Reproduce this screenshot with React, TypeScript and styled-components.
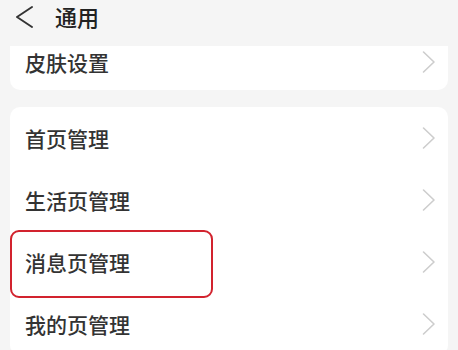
import React from "react";
import styled, { createGlobalStyle } from "styled-components";

const Global = createGlobalStyle`
  html, body { margin: 0; padding: 0; background: #f5f5f5; }
  body { font-family: "Noto Sans CJK SC", "Noto Sans", sans-serif; }
`;

const Page = styled.div`
  width: 458px;
  height: 350px;
  overflow: hidden;
  background: #f5f5f5;
  position: relative;
  display: flex;
  flex-direction: column;
`;

const Header = styled.div`
  height: 46px;
  flex: 0 0 46px;
  display: flex;
  align-items: flex-start;
  padding-left: 15px;
  box-sizing: border-box;
`;

const Back = styled.svg`
  width: 19px;
  height: 22px;
  margin-top: 6px;
`;

const Title = styled.div`
  font-size: 22px;
  font-weight: 500;
  line-height: 22px;
  color: #222;
  margin-left: 21px;
  margin-top: 5px;
`;

const Card = styled.div<{ $gap?: number }>`
  margin: ${(p) => p.$gap ?? 0}px 10px 0 10px;
  background: #fff;
  border-radius: 10px;
  display: flex;
  flex-direction: column;
`;

const TopCard = styled(Card)`
  border-radius: 0 0 10px 10px;
`;

const Row = styled.div<{ $h: number; $shift?: number }>`
  height: ${(p) => p.$h}px;
  display: flex;
  align-items: center;
  justify-content: space-between;
  padding: 0 11px 0 15px;
  box-sizing: border-box;
  padding-bottom: ${(p) => p.$shift ?? 0}px;
`;

const Label = styled.span`
  font-size: 21px;
  font-weight: 500;
  color: #333;
  line-height: 1;
`;

const Chevron = styled.svg`
  width: 16px;
  height: 24px;
`;

const Highlight = styled.div`
  position: absolute;
  left: 10px;
  top: 230px;
  width: 203px;
  height: 68px;
  box-sizing: border-box;
  border: 2.5px solid #d2232e;
  border-radius: 9px;
`;

const Arrow = () => (
  <Chevron viewBox="0 0 16 24">
    <path d="M2.5 2 L13 12 L2.5 22" fill="none" stroke="#cdcdcd" strokeWidth="1.6" strokeLinecap="round" strokeLinejoin="round" />
  </Chevron>
);

const items = ["首页管理", "生活页管理", "消息页管理", "我的页管理"];

export default function App() {
  return (
    <Page>
      <Global />
      <Header>
        <Back viewBox="0 0 19 22">
          <path d="M17 1 L2 11 L17 21" fill="none" stroke="#333" strokeWidth="1.9" strokeLinecap="round" strokeLinejoin="round" />
        </Back>
        <Title>通用</Title>
      </Header>
      <TopCard>
        <Row $h={44} $shift={12}>
          <Label>皮肤设置</Label>
          <Arrow />
        </Row>
      </TopCard>
      <Card $gap={17}>
        {items.map((t) => (
          <Row key={t} $h={62}>
            <Label>{t}</Label>
            <Arrow />
          </Row>
        ))}
      </Card>
      <Highlight />
    </Page>
  );
}
